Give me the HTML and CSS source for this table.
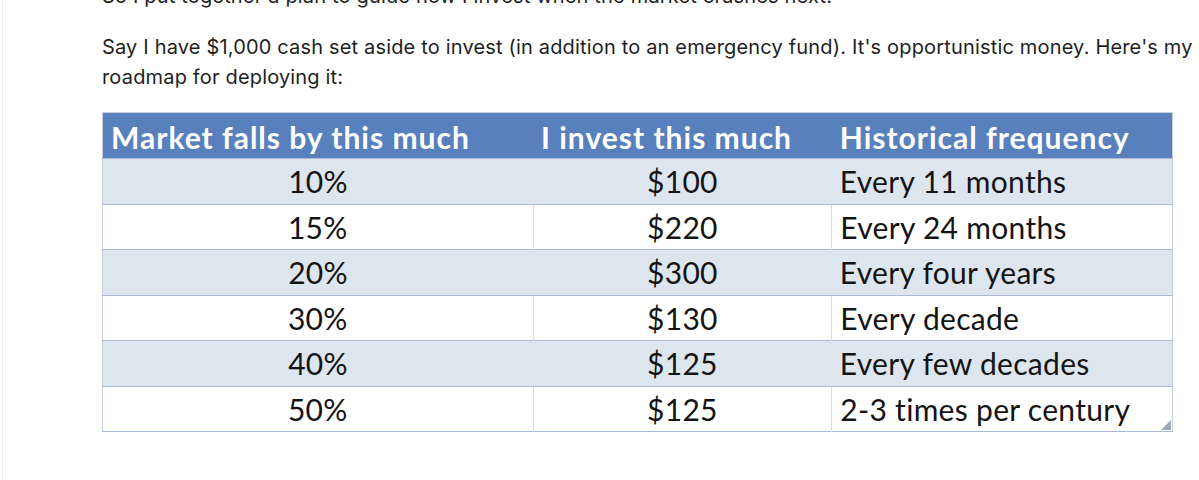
FILE: index.html
```html
<!DOCTYPE html>
<html>
<head>
<meta charset="utf-8">
<link rel="stylesheet" href="styles.css">
</head>
<body>
<div class="page">
  <div class="content">
    <p class="para">So I put together a plan to guide how I invest when the market crashes next.</p>
    <p class="para">Say I have $1,000 cash set aside to invest (in addition to an emergency fund). It's opportunistic money. Here's my roadmap for deploying it:</p>
    <div class="table-wrap">
      <table class="plan">
        <thead>
          <tr>
            <th class="c1">Market falls by this much</th>
            <th class="c2">I invest this much</th>
            <th class="c3">Historical frequency</th>
          </tr>
        </thead>
        <tbody>
          <tr class="band"><td class="c1 center">10%</td><td class="c2 center">$100</td><td class="c3">Every 11 months</td></tr>
          <tr><td class="c1 center">15%</td><td class="c2 center">$220</td><td class="c3">Every 24 months</td></tr>
          <tr class="band"><td class="c1 center">20%</td><td class="c2 center">$300</td><td class="c3">Every four years</td></tr>
          <tr><td class="c1 center">30%</td><td class="c2 center">$130</td><td class="c3">Every decade</td></tr>
          <tr class="band"><td class="c1 center">40%</td><td class="c2 center">$125</td><td class="c3">Every few decades</td></tr>
          <tr><td class="c1 center">50%</td><td class="c2 center">$125</td><td class="c3">2-3 times per century</td></tr>
        </tbody>
      </table>
      <span class="handle"></span>
    </div>
  </div>
</div>
</body>
</html>
```

FILE: styles.css
```css
html, body {
  margin: 0;
  padding: 0;
  background: #ffffff;
}

body {
  height: 480px;
  overflow: hidden;
}

.page {
  display: flow-root;
  margin-left: 2px;
  border-left: 1px solid #ededed;
  height: 480px;
}

.content {
  padding-left: 99px;
  margin-top: -19px;
}

.para {
  margin: 0 0 21px 0;
  font-family: "Inter", "Liberation Sans", sans-serif;
  font-size: 20px;
  line-height: 30px;
  letter-spacing: 0.17px;
  color: #1e1e1e;
  max-width: 1096px;
}

.table-wrap {
  position: relative;
  display: inline-block;
  margin-top: -1px;
}

.plan {
  border-collapse: collapse;
  width: 1071px;
  font-family: "Lato", "Liberation Sans", sans-serif;
  font-size: 30px;
  letter-spacing: 0.3px;
  color: #141414;
  border-left: 1px solid #c9d0dc;
  border-right: 1px solid #c9d0dc;
  border-bottom: 1px solid #a9bbd6;
}

.plan th {
  background: #5880bd;
  color: #ffffff;
  font-weight: 700;
  letter-spacing: 1px;
  text-align: left;
  padding: 2px 8px 0 8px;
  height: 43px;
  border-top: 1px solid #c6d2e6;
}

.plan td {
  height: 44.5px;
  padding: 0 8px;
  border-top: 1px solid #a9bbd6;
  background: #ffffff;
  line-height: 1;
}

.plan tbody tr:not(.band) td + td {
  border-left: 1px solid #d6dbe4;
}

.plan tr.band td {
  background: #dde5ef;
}

.c1 { width: 414px; }
.c2 { width: 282px; }
.c3 { width: 324px; }

.center {
  text-align: center;
}

.handle {
  position: absolute;
  right: 2px;
  bottom: 2px;
  width: 10px;
  height: 10px;
  background: #9ea8ba;
  clip-path: polygon(100% 0, 100% 100%, 0 100%);
}
```
